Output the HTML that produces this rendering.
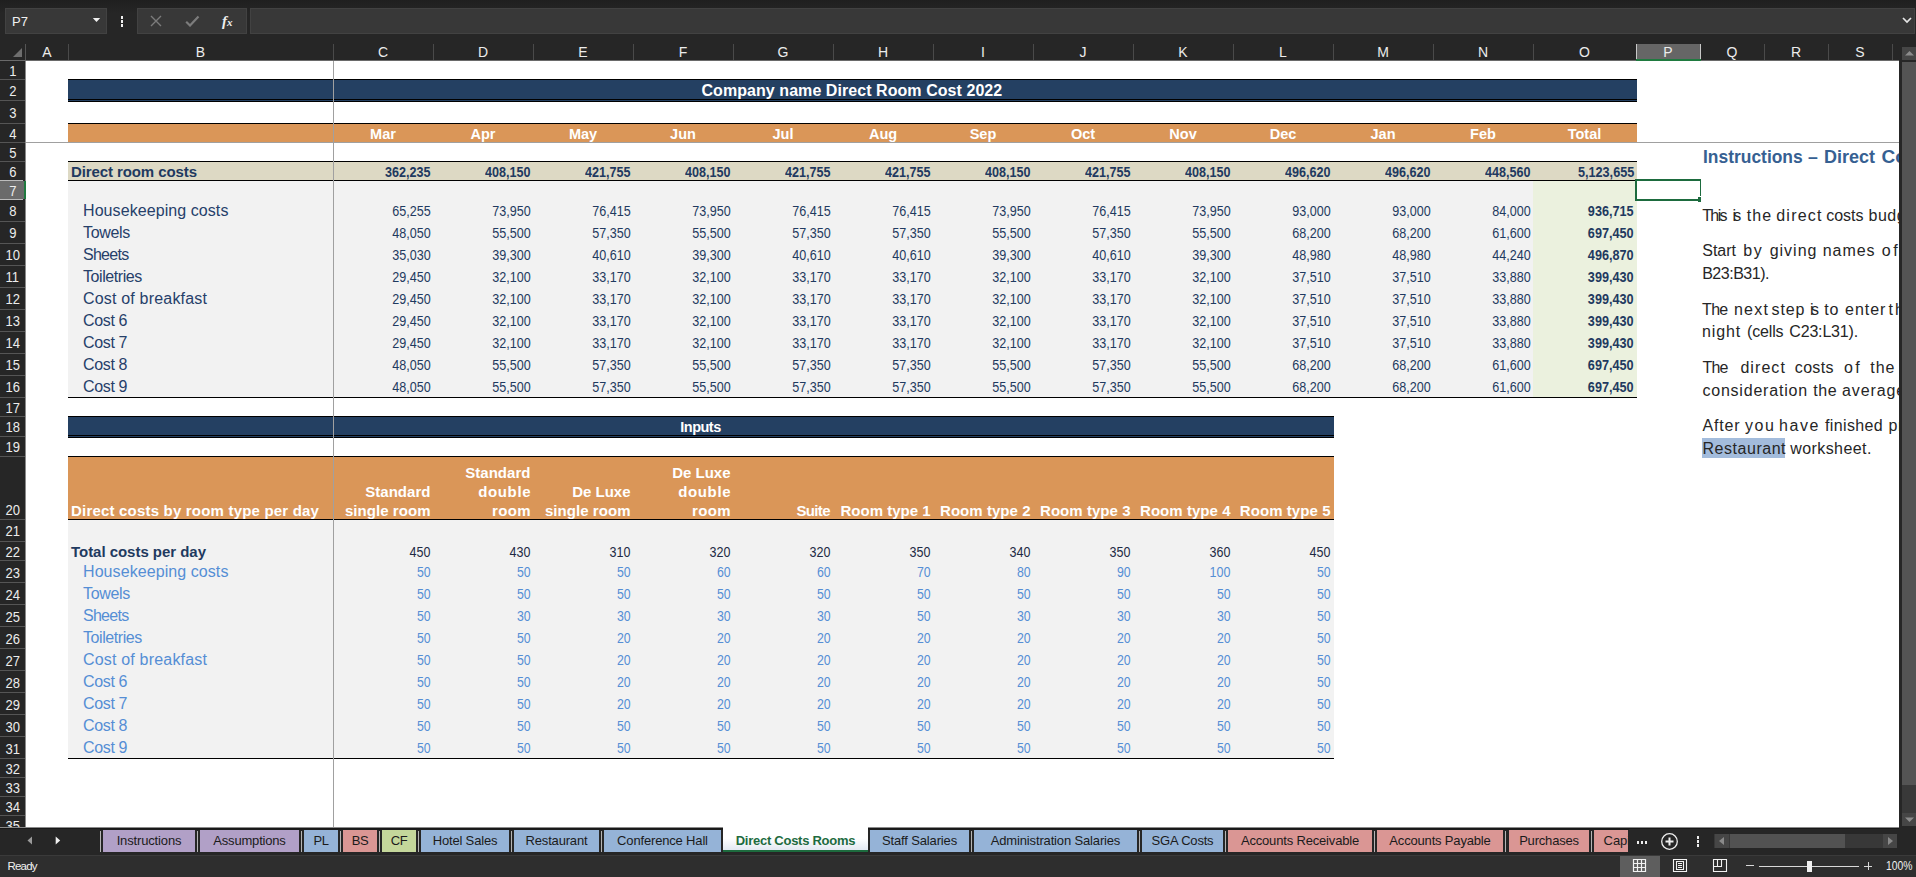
<!DOCTYPE html><html><head><meta charset="utf-8"><style>
html,body{margin:0;padding:0;width:1916px;height:877px;overflow:hidden;background:#262626;}
body{position:relative;font-family:"Liberation Sans",sans-serif;}
div{box-sizing:border-box;}
.t{position:absolute;white-space:nowrap;line-height:1;}
</style></head><body>
<div style="position:absolute;left:0px;top:0px;width:1916px;height:43px;background:linear-gradient(#1f1f1f,#262626 30%);"></div>
<div style="position:absolute;left:5px;top:8px;width:102px;height:26px;background:#383838;border:1px solid #424242;"></div>
<div class="t" style="left:12.00px;top:15.00px;font-size:13px;color:#f0f0f0;font-weight:normal;">P7</div>
<svg style="position:absolute;left:92px;top:17px" width="9" height="6"><path d="M0.8 1 L8.2 1 L4.5 5 Z" fill="#f0f0f0"/></svg>
<div style="position:absolute;left:121px;top:16px;width:2px;height:2.5px;background:#f0f0f0;"></div>
<div style="position:absolute;left:121px;top:20px;width:2px;height:2.5px;background:#f0f0f0;"></div>
<div style="position:absolute;left:121px;top:24px;width:2px;height:2.5px;background:#f0f0f0;"></div>
<div style="position:absolute;left:137px;top:8px;width:110px;height:26px;background:#383838;border:1px solid #424242;"></div>
<svg style="position:absolute;left:150px;top:15px" width="12" height="12"><path d="M1 1 L11 11 M11 1 L1 11" stroke="#7c7c7c" stroke-width="1.4"/></svg>
<svg style="position:absolute;left:185px;top:15px" width="15" height="12"><path d="M1.2 6.8 L5 10.5 L13.5 1.5" stroke="#7c7c7c" stroke-width="2.2" fill="none"/></svg>
<div class="t" style="left:222.00px;top:14.00px;font-size:15px;color:#eeeeee;font-weight:bold;font-family:'Liberation Serif',serif;"><i>f</i><i style="font-size:11px">x</i></div>
<div style="position:absolute;left:250px;top:8px;width:1665px;height:26px;background:#383838;border:1px solid #424242;"></div>
<svg style="position:absolute;left:1902px;top:17px" width="10" height="7"><path d="M1 1 L5 5 L9 1" stroke="#e6e6e6" stroke-width="1.7" fill="none"/></svg>
<div style="position:absolute;left:0px;top:43px;width:1916px;height:17px;background:#262626;"></div>
<svg style="position:absolute;left:13px;top:48px" width="9" height="9"><path d="M9 0 L9 9 L0 9 Z" fill="#6e6e6e"/></svg>
<div style="position:absolute;left:25px;top:44px;width:1px;height:17px;background:#555;"></div>
<div style="position:absolute;left:68px;top:44px;width:1px;height:16px;background:#4a4a4a;"></div>
<div class="t" style="left:42.33px;top:45.00px;font-size:14px;color:#ececec;font-weight:normal;">A</div>
<div style="position:absolute;left:333px;top:44px;width:1px;height:16px;background:#4a4a4a;"></div>
<div class="t" style="left:195.83px;top:45.00px;font-size:14px;color:#ececec;font-weight:normal;">B</div>
<div style="position:absolute;left:433px;top:44px;width:1px;height:16px;background:#4a4a4a;"></div>
<div class="t" style="left:377.95px;top:45.00px;font-size:14px;color:#ececec;font-weight:normal;">C</div>
<div style="position:absolute;left:533px;top:44px;width:1px;height:16px;background:#4a4a4a;"></div>
<div class="t" style="left:477.95px;top:45.00px;font-size:14px;color:#ececec;font-weight:normal;">D</div>
<div style="position:absolute;left:633px;top:44px;width:1px;height:16px;background:#4a4a4a;"></div>
<div class="t" style="left:578.33px;top:45.00px;font-size:14px;color:#ececec;font-weight:normal;">E</div>
<div style="position:absolute;left:733px;top:44px;width:1px;height:16px;background:#4a4a4a;"></div>
<div class="t" style="left:678.73px;top:45.00px;font-size:14px;color:#ececec;font-weight:normal;">F</div>
<div style="position:absolute;left:833px;top:44px;width:1px;height:16px;background:#4a4a4a;"></div>
<div class="t" style="left:777.55px;top:45.00px;font-size:14px;color:#ececec;font-weight:normal;">G</div>
<div style="position:absolute;left:933px;top:44px;width:1px;height:16px;background:#4a4a4a;"></div>
<div class="t" style="left:877.95px;top:45.00px;font-size:14px;color:#ececec;font-weight:normal;">H</div>
<div style="position:absolute;left:1033px;top:44px;width:1px;height:16px;background:#4a4a4a;"></div>
<div class="t" style="left:981.05px;top:45.00px;font-size:14px;color:#ececec;font-weight:normal;">I</div>
<div style="position:absolute;left:1133px;top:44px;width:1px;height:16px;background:#4a4a4a;"></div>
<div class="t" style="left:1079.50px;top:45.00px;font-size:14px;color:#ececec;font-weight:normal;">J</div>
<div style="position:absolute;left:1233px;top:44px;width:1px;height:16px;background:#4a4a4a;"></div>
<div class="t" style="left:1178.33px;top:45.00px;font-size:14px;color:#ececec;font-weight:normal;">K</div>
<div style="position:absolute;left:1333px;top:44px;width:1px;height:16px;background:#4a4a4a;"></div>
<div class="t" style="left:1279.11px;top:45.00px;font-size:14px;color:#ececec;font-weight:normal;">L</div>
<div style="position:absolute;left:1433px;top:44px;width:1px;height:16px;background:#4a4a4a;"></div>
<div class="t" style="left:1377.17px;top:45.00px;font-size:14px;color:#ececec;font-weight:normal;">M</div>
<div style="position:absolute;left:1533px;top:44px;width:1px;height:16px;background:#4a4a4a;"></div>
<div class="t" style="left:1477.95px;top:45.00px;font-size:14px;color:#ececec;font-weight:normal;">N</div>
<div style="position:absolute;left:1636px;top:44px;width:1px;height:16px;background:#4a4a4a;"></div>
<div class="t" style="left:1579.05px;top:45.00px;font-size:14px;color:#ececec;font-weight:normal;">O</div>
<div style="position:absolute;left:1700px;top:44px;width:1px;height:16px;background:#4a4a4a;"></div>
<div style="position:absolute;left:1636px;top:44px;width:65px;height:15px;background:#666666;"></div>
<div style="position:absolute;left:1636px;top:44px;width:1px;height:15px;background:#c8c8c8;"></div>
<div style="position:absolute;left:1700px;top:44px;width:1px;height:15px;background:#c8c8c8;"></div>
<div class="t" style="left:1663.33px;top:45.00px;font-size:14px;color:#ececec;font-weight:normal;">P</div>
<div style="position:absolute;left:1764px;top:44px;width:1px;height:16px;background:#4a4a4a;"></div>
<div class="t" style="left:1726.55px;top:45.00px;font-size:14px;color:#ececec;font-weight:normal;">Q</div>
<div style="position:absolute;left:1828px;top:44px;width:1px;height:16px;background:#4a4a4a;"></div>
<div class="t" style="left:1790.95px;top:45.00px;font-size:14px;color:#ececec;font-weight:normal;">R</div>
<div style="position:absolute;left:1892px;top:44px;width:1px;height:16px;background:#4a4a4a;"></div>
<div class="t" style="left:1855.33px;top:45.00px;font-size:14px;color:#ececec;font-weight:normal;">S</div>
<div style="position:absolute;left:0px;top:60px;width:1899px;height:1px;background:#6a6a6a;"></div>
<div style="position:absolute;left:1636px;top:59px;width:65px;height:2px;background:#1f7a3f;"></div>
<div style="position:absolute;left:0px;top:61px;width:25px;height:766px;background:#262626;"></div>
<div style="position:absolute;left:0px;top:79px;width:25px;height:1px;background:#555555;"></div>
<div class="t" style="left:8.61px;top:64.00px;font-size:14px;color:#ececec;font-weight:normal;transform:scaleX(0.9300);transform-origin:center 0;">1</div>
<div style="position:absolute;left:0px;top:100px;width:25px;height:1px;background:#555555;"></div>
<div class="t" style="left:8.61px;top:84.00px;font-size:14px;color:#ececec;font-weight:normal;transform:scaleX(0.9300);transform-origin:center 0;">2</div>
<div style="position:absolute;left:0px;top:123px;width:25px;height:1px;background:#555555;"></div>
<div class="t" style="left:8.61px;top:106.00px;font-size:14px;color:#ececec;font-weight:normal;transform:scaleX(0.9300);transform-origin:center 0;">3</div>
<div style="position:absolute;left:0px;top:142px;width:25px;height:1px;background:#555555;"></div>
<div class="t" style="left:8.61px;top:127.00px;font-size:14px;color:#ececec;font-weight:normal;transform:scaleX(0.9300);transform-origin:center 0;">4</div>
<div style="position:absolute;left:0px;top:161px;width:25px;height:1px;background:#555555;"></div>
<div class="t" style="left:8.61px;top:146.00px;font-size:14px;color:#ececec;font-weight:normal;transform:scaleX(0.9300);transform-origin:center 0;">5</div>
<div class="t" style="left:8.61px;top:165.00px;font-size:14px;color:#ececec;font-weight:normal;transform:scaleX(0.9300);transform-origin:center 0;">6</div>
<div style="position:absolute;left:0px;top:181px;width:25px;height:18px;background:#6b6b6b;"></div>
<div style="position:absolute;left:0px;top:180px;width:23px;height:1px;background:#bdbdbd;"></div>
<div style="position:absolute;left:0px;top:199px;width:23px;height:1px;background:#bdbdbd;"></div>
<div class="t" style="left:8.61px;top:184.00px;font-size:14px;color:#ececec;font-weight:normal;transform:scaleX(0.9300);transform-origin:center 0;">7</div>
<div style="position:absolute;left:0px;top:221px;width:25px;height:1px;background:#555555;"></div>
<div class="t" style="left:8.61px;top:204.00px;font-size:14px;color:#ececec;font-weight:normal;transform:scaleX(0.9300);transform-origin:center 0;">8</div>
<div style="position:absolute;left:0px;top:243px;width:25px;height:1px;background:#555555;"></div>
<div class="t" style="left:8.61px;top:226.00px;font-size:14px;color:#ececec;font-weight:normal;transform:scaleX(0.9300);transform-origin:center 0;">9</div>
<div style="position:absolute;left:0px;top:265px;width:25px;height:1px;background:#555555;"></div>
<div class="t" style="left:4.72px;top:248.00px;font-size:14px;color:#ececec;font-weight:normal;transform:scaleX(0.9300);transform-origin:center 0;">10</div>
<div style="position:absolute;left:0px;top:287px;width:25px;height:1px;background:#555555;"></div>
<div class="t" style="left:5.23px;top:270.00px;font-size:14px;color:#ececec;font-weight:normal;transform:scaleX(0.9300);transform-origin:center 0;">11</div>
<div style="position:absolute;left:0px;top:309px;width:25px;height:1px;background:#555555;"></div>
<div class="t" style="left:4.72px;top:292.00px;font-size:14px;color:#ececec;font-weight:normal;transform:scaleX(0.9300);transform-origin:center 0;">12</div>
<div style="position:absolute;left:0px;top:331px;width:25px;height:1px;background:#555555;"></div>
<div class="t" style="left:4.72px;top:314.00px;font-size:14px;color:#ececec;font-weight:normal;transform:scaleX(0.9300);transform-origin:center 0;">13</div>
<div style="position:absolute;left:0px;top:353px;width:25px;height:1px;background:#555555;"></div>
<div class="t" style="left:4.72px;top:336.00px;font-size:14px;color:#ececec;font-weight:normal;transform:scaleX(0.9300);transform-origin:center 0;">14</div>
<div style="position:absolute;left:0px;top:375px;width:25px;height:1px;background:#555555;"></div>
<div class="t" style="left:4.72px;top:358.00px;font-size:14px;color:#ececec;font-weight:normal;transform:scaleX(0.9300);transform-origin:center 0;">15</div>
<div style="position:absolute;left:0px;top:397px;width:25px;height:1px;background:#555555;"></div>
<div class="t" style="left:4.72px;top:380.00px;font-size:14px;color:#ececec;font-weight:normal;transform:scaleX(0.9300);transform-origin:center 0;">16</div>
<div style="position:absolute;left:0px;top:416px;width:25px;height:1px;background:#555555;"></div>
<div class="t" style="left:4.72px;top:401.00px;font-size:14px;color:#ececec;font-weight:normal;transform:scaleX(0.9300);transform-origin:center 0;">17</div>
<div style="position:absolute;left:0px;top:436px;width:25px;height:1px;background:#555555;"></div>
<div class="t" style="left:4.72px;top:420.00px;font-size:14px;color:#ececec;font-weight:normal;transform:scaleX(0.9300);transform-origin:center 0;">18</div>
<div style="position:absolute;left:0px;top:456px;width:25px;height:1px;background:#555555;"></div>
<div class="t" style="left:4.72px;top:440.00px;font-size:14px;color:#ececec;font-weight:normal;transform:scaleX(0.9300);transform-origin:center 0;">19</div>
<div style="position:absolute;left:0px;top:519px;width:25px;height:1px;background:#555555;"></div>
<div class="t" style="left:4.72px;top:503.00px;font-size:14px;color:#ececec;font-weight:normal;transform:scaleX(0.9300);transform-origin:center 0;">20</div>
<div style="position:absolute;left:0px;top:541px;width:25px;height:1px;background:#555555;"></div>
<div class="t" style="left:4.72px;top:524.00px;font-size:14px;color:#ececec;font-weight:normal;transform:scaleX(0.9300);transform-origin:center 0;">21</div>
<div style="position:absolute;left:0px;top:560px;width:25px;height:1px;background:#555555;"></div>
<div class="t" style="left:4.72px;top:545.00px;font-size:14px;color:#ececec;font-weight:normal;transform:scaleX(0.9300);transform-origin:center 0;">22</div>
<div style="position:absolute;left:0px;top:582px;width:25px;height:1px;background:#555555;"></div>
<div class="t" style="left:4.72px;top:566.00px;font-size:14px;color:#ececec;font-weight:normal;transform:scaleX(0.9300);transform-origin:center 0;">23</div>
<div style="position:absolute;left:0px;top:604px;width:25px;height:1px;background:#555555;"></div>
<div class="t" style="left:4.72px;top:588.00px;font-size:14px;color:#ececec;font-weight:normal;transform:scaleX(0.9300);transform-origin:center 0;">24</div>
<div style="position:absolute;left:0px;top:626px;width:25px;height:1px;background:#555555;"></div>
<div class="t" style="left:4.72px;top:610.00px;font-size:14px;color:#ececec;font-weight:normal;transform:scaleX(0.9300);transform-origin:center 0;">25</div>
<div style="position:absolute;left:0px;top:648px;width:25px;height:1px;background:#555555;"></div>
<div class="t" style="left:4.72px;top:632.00px;font-size:14px;color:#ececec;font-weight:normal;transform:scaleX(0.9300);transform-origin:center 0;">26</div>
<div style="position:absolute;left:0px;top:670px;width:25px;height:1px;background:#555555;"></div>
<div class="t" style="left:4.72px;top:654.00px;font-size:14px;color:#ececec;font-weight:normal;transform:scaleX(0.9300);transform-origin:center 0;">27</div>
<div style="position:absolute;left:0px;top:692px;width:25px;height:1px;background:#555555;"></div>
<div class="t" style="left:4.72px;top:676.00px;font-size:14px;color:#ececec;font-weight:normal;transform:scaleX(0.9300);transform-origin:center 0;">28</div>
<div style="position:absolute;left:0px;top:714px;width:25px;height:1px;background:#555555;"></div>
<div class="t" style="left:4.72px;top:698.00px;font-size:14px;color:#ececec;font-weight:normal;transform:scaleX(0.9300);transform-origin:center 0;">29</div>
<div style="position:absolute;left:0px;top:736px;width:25px;height:1px;background:#555555;"></div>
<div class="t" style="left:4.72px;top:720.00px;font-size:14px;color:#ececec;font-weight:normal;transform:scaleX(0.9300);transform-origin:center 0;">30</div>
<div style="position:absolute;left:0px;top:758px;width:25px;height:1px;background:#555555;"></div>
<div class="t" style="left:4.72px;top:742.00px;font-size:14px;color:#ececec;font-weight:normal;transform:scaleX(0.9300);transform-origin:center 0;">31</div>
<div style="position:absolute;left:0px;top:777px;width:25px;height:1px;background:#555555;"></div>
<div class="t" style="left:4.72px;top:762.00px;font-size:14px;color:#ececec;font-weight:normal;transform:scaleX(0.9300);transform-origin:center 0;">32</div>
<div style="position:absolute;left:0px;top:796px;width:25px;height:1px;background:#555555;"></div>
<div class="t" style="left:4.72px;top:781.00px;font-size:14px;color:#ececec;font-weight:normal;transform:scaleX(0.9300);transform-origin:center 0;">33</div>
<div style="position:absolute;left:0px;top:815px;width:25px;height:1px;background:#555555;"></div>
<div class="t" style="left:4.72px;top:800.00px;font-size:14px;color:#ececec;font-weight:normal;transform:scaleX(0.9300);transform-origin:center 0;">34</div>
<div class="t" style="left:4.72px;top:819.00px;font-size:14px;color:#ececec;font-weight:normal;transform:scaleX(0.9300);transform-origin:center 0;">35</div>
<div style="position:absolute;left:25px;top:61px;width:1px;height:766px;background:#8a8a8a;"></div>
<div style="position:absolute;left:24px;top:181px;width:2px;height:18px;background:#1f7a3f;"></div>
<div style="position:absolute;left:26px;top:61px;width:1873px;height:766px;overflow:hidden;background:#fff;">
<div style="position:absolute;left:42px;top:18px;width:1569px;height:1px;background:#000;"></div>
<div style="position:absolute;left:42px;top:19px;width:1569px;height:19px;background:#244062;"></div>
<div style="position:absolute;left:42px;top:38px;width:1569px;height:1px;background:#000;"></div>
<div style="position:absolute;left:42px;top:39px;width:1569px;height:1px;background:#244062;"></div>
<div style="position:absolute;left:42px;top:40px;width:1569px;height:1px;background:#000;"></div>
<div class="t" style="left:675.47px;top:22.00px;font-size:16px;color:#ffffff;font-weight:bold;letter-spacing:0.061px;">Company name Direct Room Cost 2022</div>
<div style="position:absolute;left:42px;top:62px;width:1569px;height:1px;background:#000;"></div>
<div style="position:absolute;left:42px;top:63px;width:1569px;height:18px;background:#DA9658;"></div>
<div class="t" style="left:344.11px;top:66.00px;font-size:14.5px;color:#ffffff;font-weight:bold;">Mar</div>
<div class="t" style="left:444.52px;top:66.00px;font-size:14.5px;color:#ffffff;font-weight:bold;">Apr</div>
<div class="t" style="left:542.90px;top:66.00px;font-size:14.5px;color:#ffffff;font-weight:bold;">May</div>
<div class="t" style="left:644.11px;top:66.00px;font-size:14.5px;color:#ffffff;font-weight:bold;">Jun</div>
<div class="t" style="left:746.52px;top:66.00px;font-size:14.5px;color:#ffffff;font-weight:bold;">Jul</div>
<div class="t" style="left:842.91px;top:66.00px;font-size:14.5px;color:#ffffff;font-weight:bold;">Aug</div>
<div class="t" style="left:943.70px;top:66.00px;font-size:14.5px;color:#ffffff;font-weight:bold;">Sep</div>
<div class="t" style="left:1044.91px;top:66.00px;font-size:14.5px;color:#ffffff;font-weight:bold;">Oct</div>
<div class="t" style="left:1143.30px;top:66.00px;font-size:14.5px;color:#ffffff;font-weight:bold;">Nov</div>
<div class="t" style="left:1243.70px;top:66.00px;font-size:14.5px;color:#ffffff;font-weight:bold;">Dec</div>
<div class="t" style="left:1344.51px;top:66.00px;font-size:14.5px;color:#ffffff;font-weight:bold;">Jan</div>
<div class="t" style="left:1444.11px;top:66.00px;font-size:14.5px;color:#ffffff;font-weight:bold;">Feb</div>
<div class="t" style="left:1541.72px;top:66.00px;font-size:14.5px;color:#ffffff;font-weight:bold;">Total</div>
<div style="position:absolute;left:42px;top:100px;width:1569px;height:1px;background:#000;"></div>
<div style="position:absolute;left:42px;top:101px;width:1569px;height:18px;background:#DDD9C4;"></div>
<div style="position:absolute;left:42px;top:119px;width:1569px;height:1px;background:#000;"></div>
<div class="t" style="left:45.00px;top:103.00px;font-size:15px;color:#1F3A60;font-weight:bold;letter-spacing:-0.098px;">Direct room costs</div>
<div class="t" style="left:354.42px;top:104.00px;font-size:14px;color:#1F3A60;font-weight:bold;transform:scaleX(0.8999);transform-origin:right 0;">362,235</div>
<div class="t" style="left:454.42px;top:104.00px;font-size:14px;color:#1F3A60;font-weight:bold;transform:scaleX(0.8999);transform-origin:right 0;">408,150</div>
<div class="t" style="left:554.42px;top:104.00px;font-size:14px;color:#1F3A60;font-weight:bold;transform:scaleX(0.8999);transform-origin:right 0;">421,755</div>
<div class="t" style="left:654.42px;top:104.00px;font-size:14px;color:#1F3A60;font-weight:bold;transform:scaleX(0.8999);transform-origin:right 0;">408,150</div>
<div class="t" style="left:754.42px;top:104.00px;font-size:14px;color:#1F3A60;font-weight:bold;transform:scaleX(0.8999);transform-origin:right 0;">421,755</div>
<div class="t" style="left:854.42px;top:104.00px;font-size:14px;color:#1F3A60;font-weight:bold;transform:scaleX(0.8999);transform-origin:right 0;">421,755</div>
<div class="t" style="left:954.42px;top:104.00px;font-size:14px;color:#1F3A60;font-weight:bold;transform:scaleX(0.8999);transform-origin:right 0;">408,150</div>
<div class="t" style="left:1054.42px;top:104.00px;font-size:14px;color:#1F3A60;font-weight:bold;transform:scaleX(0.8999);transform-origin:right 0;">421,755</div>
<div class="t" style="left:1154.42px;top:104.00px;font-size:14px;color:#1F3A60;font-weight:bold;transform:scaleX(0.8999);transform-origin:right 0;">408,150</div>
<div class="t" style="left:1254.42px;top:104.00px;font-size:14px;color:#1F3A60;font-weight:bold;transform:scaleX(0.8999);transform-origin:right 0;">496,620</div>
<div class="t" style="left:1354.42px;top:104.00px;font-size:14px;color:#1F3A60;font-weight:bold;transform:scaleX(0.8999);transform-origin:right 0;">496,620</div>
<div class="t" style="left:1454.42px;top:104.00px;font-size:14px;color:#1F3A60;font-weight:bold;transform:scaleX(0.8999);transform-origin:right 0;">448,560</div>
<div class="t" style="left:1545.75px;top:104.00px;font-size:14px;color:#1F3A60;font-weight:bold;transform:scaleX(0.9054);transform-origin:right 0;">5,123,655</div>
<div style="position:absolute;left:42px;top:120px;width:1569px;height:216px;background:#F2F2F2;"></div>
<div style="position:absolute;left:1507px;top:120px;width:104px;height:216px;background:#EBF1DE;"></div>
<div style="position:absolute;left:42px;top:336px;width:1569px;height:1px;background:#000;"></div>
<div class="t" style="left:57.00px;top:142.00px;font-size:16px;color:#26406A;font-weight:normal;letter-spacing:0.077px;">Housekeeping costs</div>
<div class="t" style="left:362.20px;top:143.00px;font-size:14px;color:#1F3A60;font-weight:normal;transform:scaleX(0.8992);transform-origin:right 0;">65,255</div>
<div class="t" style="left:462.20px;top:143.00px;font-size:14px;color:#1F3A60;font-weight:normal;transform:scaleX(0.8992);transform-origin:right 0;">73,950</div>
<div class="t" style="left:562.20px;top:143.00px;font-size:14px;color:#1F3A60;font-weight:normal;transform:scaleX(0.8992);transform-origin:right 0;">76,415</div>
<div class="t" style="left:662.20px;top:143.00px;font-size:14px;color:#1F3A60;font-weight:normal;transform:scaleX(0.8992);transform-origin:right 0;">73,950</div>
<div class="t" style="left:762.20px;top:143.00px;font-size:14px;color:#1F3A60;font-weight:normal;transform:scaleX(0.8992);transform-origin:right 0;">76,415</div>
<div class="t" style="left:862.20px;top:143.00px;font-size:14px;color:#1F3A60;font-weight:normal;transform:scaleX(0.8992);transform-origin:right 0;">76,415</div>
<div class="t" style="left:962.20px;top:143.00px;font-size:14px;color:#1F3A60;font-weight:normal;transform:scaleX(0.8992);transform-origin:right 0;">73,950</div>
<div class="t" style="left:1062.20px;top:143.00px;font-size:14px;color:#1F3A60;font-weight:normal;transform:scaleX(0.8992);transform-origin:right 0;">76,415</div>
<div class="t" style="left:1162.20px;top:143.00px;font-size:14px;color:#1F3A60;font-weight:normal;transform:scaleX(0.8992);transform-origin:right 0;">73,950</div>
<div class="t" style="left:1262.20px;top:143.00px;font-size:14px;color:#1F3A60;font-weight:normal;transform:scaleX(0.8992);transform-origin:right 0;">93,000</div>
<div class="t" style="left:1362.20px;top:143.00px;font-size:14px;color:#1F3A60;font-weight:normal;transform:scaleX(0.8992);transform-origin:right 0;">93,000</div>
<div class="t" style="left:1462.20px;top:143.00px;font-size:14px;color:#1F3A60;font-weight:normal;transform:scaleX(0.8992);transform-origin:right 0;">84,000</div>
<div class="t" style="left:1557.42px;top:143.00px;font-size:14px;color:#1F3A60;font-weight:bold;transform:scaleX(0.9039);transform-origin:right 0;">936,715</div>
<div class="t" style="left:57.00px;top:164.00px;font-size:16px;color:#26406A;font-weight:normal;letter-spacing:-0.311px;">Towels</div>
<div class="t" style="left:362.20px;top:165.00px;font-size:14px;color:#1F3A60;font-weight:normal;transform:scaleX(0.8992);transform-origin:right 0;">48,050</div>
<div class="t" style="left:462.20px;top:165.00px;font-size:14px;color:#1F3A60;font-weight:normal;transform:scaleX(0.8992);transform-origin:right 0;">55,500</div>
<div class="t" style="left:562.20px;top:165.00px;font-size:14px;color:#1F3A60;font-weight:normal;transform:scaleX(0.8992);transform-origin:right 0;">57,350</div>
<div class="t" style="left:662.20px;top:165.00px;font-size:14px;color:#1F3A60;font-weight:normal;transform:scaleX(0.8992);transform-origin:right 0;">55,500</div>
<div class="t" style="left:762.20px;top:165.00px;font-size:14px;color:#1F3A60;font-weight:normal;transform:scaleX(0.8992);transform-origin:right 0;">57,350</div>
<div class="t" style="left:862.20px;top:165.00px;font-size:14px;color:#1F3A60;font-weight:normal;transform:scaleX(0.8992);transform-origin:right 0;">57,350</div>
<div class="t" style="left:962.20px;top:165.00px;font-size:14px;color:#1F3A60;font-weight:normal;transform:scaleX(0.8992);transform-origin:right 0;">55,500</div>
<div class="t" style="left:1062.20px;top:165.00px;font-size:14px;color:#1F3A60;font-weight:normal;transform:scaleX(0.8992);transform-origin:right 0;">57,350</div>
<div class="t" style="left:1162.20px;top:165.00px;font-size:14px;color:#1F3A60;font-weight:normal;transform:scaleX(0.8992);transform-origin:right 0;">55,500</div>
<div class="t" style="left:1262.20px;top:165.00px;font-size:14px;color:#1F3A60;font-weight:normal;transform:scaleX(0.8992);transform-origin:right 0;">68,200</div>
<div class="t" style="left:1362.20px;top:165.00px;font-size:14px;color:#1F3A60;font-weight:normal;transform:scaleX(0.8992);transform-origin:right 0;">68,200</div>
<div class="t" style="left:1462.20px;top:165.00px;font-size:14px;color:#1F3A60;font-weight:normal;transform:scaleX(0.8992);transform-origin:right 0;">61,600</div>
<div class="t" style="left:1557.42px;top:165.00px;font-size:14px;color:#1F3A60;font-weight:bold;transform:scaleX(0.9039);transform-origin:right 0;">697,450</div>
<div class="t" style="left:57.00px;top:186.00px;font-size:16px;color:#26406A;font-weight:normal;letter-spacing:-0.729px;">Sheets</div>
<div class="t" style="left:362.20px;top:187.00px;font-size:14px;color:#1F3A60;font-weight:normal;transform:scaleX(0.8992);transform-origin:right 0;">35,030</div>
<div class="t" style="left:462.20px;top:187.00px;font-size:14px;color:#1F3A60;font-weight:normal;transform:scaleX(0.8992);transform-origin:right 0;">39,300</div>
<div class="t" style="left:562.20px;top:187.00px;font-size:14px;color:#1F3A60;font-weight:normal;transform:scaleX(0.8992);transform-origin:right 0;">40,610</div>
<div class="t" style="left:662.20px;top:187.00px;font-size:14px;color:#1F3A60;font-weight:normal;transform:scaleX(0.8992);transform-origin:right 0;">39,300</div>
<div class="t" style="left:762.20px;top:187.00px;font-size:14px;color:#1F3A60;font-weight:normal;transform:scaleX(0.8992);transform-origin:right 0;">40,610</div>
<div class="t" style="left:862.20px;top:187.00px;font-size:14px;color:#1F3A60;font-weight:normal;transform:scaleX(0.8992);transform-origin:right 0;">40,610</div>
<div class="t" style="left:962.20px;top:187.00px;font-size:14px;color:#1F3A60;font-weight:normal;transform:scaleX(0.8992);transform-origin:right 0;">39,300</div>
<div class="t" style="left:1062.20px;top:187.00px;font-size:14px;color:#1F3A60;font-weight:normal;transform:scaleX(0.8992);transform-origin:right 0;">40,610</div>
<div class="t" style="left:1162.20px;top:187.00px;font-size:14px;color:#1F3A60;font-weight:normal;transform:scaleX(0.8992);transform-origin:right 0;">39,300</div>
<div class="t" style="left:1262.20px;top:187.00px;font-size:14px;color:#1F3A60;font-weight:normal;transform:scaleX(0.8992);transform-origin:right 0;">48,980</div>
<div class="t" style="left:1362.20px;top:187.00px;font-size:14px;color:#1F3A60;font-weight:normal;transform:scaleX(0.8992);transform-origin:right 0;">48,980</div>
<div class="t" style="left:1462.20px;top:187.00px;font-size:14px;color:#1F3A60;font-weight:normal;transform:scaleX(0.8992);transform-origin:right 0;">44,240</div>
<div class="t" style="left:1557.42px;top:187.00px;font-size:14px;color:#1F3A60;font-weight:bold;transform:scaleX(0.9039);transform-origin:right 0;">496,870</div>
<div class="t" style="left:57.00px;top:208.00px;font-size:16px;color:#26406A;font-weight:normal;letter-spacing:-0.423px;">Toiletries</div>
<div class="t" style="left:362.20px;top:209.00px;font-size:14px;color:#1F3A60;font-weight:normal;transform:scaleX(0.8992);transform-origin:right 0;">29,450</div>
<div class="t" style="left:462.20px;top:209.00px;font-size:14px;color:#1F3A60;font-weight:normal;transform:scaleX(0.8992);transform-origin:right 0;">32,100</div>
<div class="t" style="left:562.20px;top:209.00px;font-size:14px;color:#1F3A60;font-weight:normal;transform:scaleX(0.8992);transform-origin:right 0;">33,170</div>
<div class="t" style="left:662.20px;top:209.00px;font-size:14px;color:#1F3A60;font-weight:normal;transform:scaleX(0.8992);transform-origin:right 0;">32,100</div>
<div class="t" style="left:762.20px;top:209.00px;font-size:14px;color:#1F3A60;font-weight:normal;transform:scaleX(0.8992);transform-origin:right 0;">33,170</div>
<div class="t" style="left:862.20px;top:209.00px;font-size:14px;color:#1F3A60;font-weight:normal;transform:scaleX(0.8992);transform-origin:right 0;">33,170</div>
<div class="t" style="left:962.20px;top:209.00px;font-size:14px;color:#1F3A60;font-weight:normal;transform:scaleX(0.8992);transform-origin:right 0;">32,100</div>
<div class="t" style="left:1062.20px;top:209.00px;font-size:14px;color:#1F3A60;font-weight:normal;transform:scaleX(0.8992);transform-origin:right 0;">33,170</div>
<div class="t" style="left:1162.20px;top:209.00px;font-size:14px;color:#1F3A60;font-weight:normal;transform:scaleX(0.8992);transform-origin:right 0;">32,100</div>
<div class="t" style="left:1262.20px;top:209.00px;font-size:14px;color:#1F3A60;font-weight:normal;transform:scaleX(0.8992);transform-origin:right 0;">37,510</div>
<div class="t" style="left:1362.20px;top:209.00px;font-size:14px;color:#1F3A60;font-weight:normal;transform:scaleX(0.8992);transform-origin:right 0;">37,510</div>
<div class="t" style="left:1462.20px;top:209.00px;font-size:14px;color:#1F3A60;font-weight:normal;transform:scaleX(0.8992);transform-origin:right 0;">33,880</div>
<div class="t" style="left:1557.42px;top:209.00px;font-size:14px;color:#1F3A60;font-weight:bold;transform:scaleX(0.9039);transform-origin:right 0;">399,430</div>
<div class="t" style="left:57.00px;top:230.00px;font-size:16px;color:#26406A;font-weight:normal;letter-spacing:0.185px;">Cost of breakfast</div>
<div class="t" style="left:362.20px;top:231.00px;font-size:14px;color:#1F3A60;font-weight:normal;transform:scaleX(0.8992);transform-origin:right 0;">29,450</div>
<div class="t" style="left:462.20px;top:231.00px;font-size:14px;color:#1F3A60;font-weight:normal;transform:scaleX(0.8992);transform-origin:right 0;">32,100</div>
<div class="t" style="left:562.20px;top:231.00px;font-size:14px;color:#1F3A60;font-weight:normal;transform:scaleX(0.8992);transform-origin:right 0;">33,170</div>
<div class="t" style="left:662.20px;top:231.00px;font-size:14px;color:#1F3A60;font-weight:normal;transform:scaleX(0.8992);transform-origin:right 0;">32,100</div>
<div class="t" style="left:762.20px;top:231.00px;font-size:14px;color:#1F3A60;font-weight:normal;transform:scaleX(0.8992);transform-origin:right 0;">33,170</div>
<div class="t" style="left:862.20px;top:231.00px;font-size:14px;color:#1F3A60;font-weight:normal;transform:scaleX(0.8992);transform-origin:right 0;">33,170</div>
<div class="t" style="left:962.20px;top:231.00px;font-size:14px;color:#1F3A60;font-weight:normal;transform:scaleX(0.8992);transform-origin:right 0;">32,100</div>
<div class="t" style="left:1062.20px;top:231.00px;font-size:14px;color:#1F3A60;font-weight:normal;transform:scaleX(0.8992);transform-origin:right 0;">33,170</div>
<div class="t" style="left:1162.20px;top:231.00px;font-size:14px;color:#1F3A60;font-weight:normal;transform:scaleX(0.8992);transform-origin:right 0;">32,100</div>
<div class="t" style="left:1262.20px;top:231.00px;font-size:14px;color:#1F3A60;font-weight:normal;transform:scaleX(0.8992);transform-origin:right 0;">37,510</div>
<div class="t" style="left:1362.20px;top:231.00px;font-size:14px;color:#1F3A60;font-weight:normal;transform:scaleX(0.8992);transform-origin:right 0;">37,510</div>
<div class="t" style="left:1462.20px;top:231.00px;font-size:14px;color:#1F3A60;font-weight:normal;transform:scaleX(0.8992);transform-origin:right 0;">33,880</div>
<div class="t" style="left:1557.42px;top:231.00px;font-size:14px;color:#1F3A60;font-weight:bold;transform:scaleX(0.9039);transform-origin:right 0;">399,430</div>
<div class="t" style="left:57.00px;top:252.00px;font-size:16px;color:#26406A;font-weight:normal;letter-spacing:-0.356px;">Cost 6</div>
<div class="t" style="left:362.20px;top:253.00px;font-size:14px;color:#1F3A60;font-weight:normal;transform:scaleX(0.8992);transform-origin:right 0;">29,450</div>
<div class="t" style="left:462.20px;top:253.00px;font-size:14px;color:#1F3A60;font-weight:normal;transform:scaleX(0.8992);transform-origin:right 0;">32,100</div>
<div class="t" style="left:562.20px;top:253.00px;font-size:14px;color:#1F3A60;font-weight:normal;transform:scaleX(0.8992);transform-origin:right 0;">33,170</div>
<div class="t" style="left:662.20px;top:253.00px;font-size:14px;color:#1F3A60;font-weight:normal;transform:scaleX(0.8992);transform-origin:right 0;">32,100</div>
<div class="t" style="left:762.20px;top:253.00px;font-size:14px;color:#1F3A60;font-weight:normal;transform:scaleX(0.8992);transform-origin:right 0;">33,170</div>
<div class="t" style="left:862.20px;top:253.00px;font-size:14px;color:#1F3A60;font-weight:normal;transform:scaleX(0.8992);transform-origin:right 0;">33,170</div>
<div class="t" style="left:962.20px;top:253.00px;font-size:14px;color:#1F3A60;font-weight:normal;transform:scaleX(0.8992);transform-origin:right 0;">32,100</div>
<div class="t" style="left:1062.20px;top:253.00px;font-size:14px;color:#1F3A60;font-weight:normal;transform:scaleX(0.8992);transform-origin:right 0;">33,170</div>
<div class="t" style="left:1162.20px;top:253.00px;font-size:14px;color:#1F3A60;font-weight:normal;transform:scaleX(0.8992);transform-origin:right 0;">32,100</div>
<div class="t" style="left:1262.20px;top:253.00px;font-size:14px;color:#1F3A60;font-weight:normal;transform:scaleX(0.8992);transform-origin:right 0;">37,510</div>
<div class="t" style="left:1362.20px;top:253.00px;font-size:14px;color:#1F3A60;font-weight:normal;transform:scaleX(0.8992);transform-origin:right 0;">37,510</div>
<div class="t" style="left:1462.20px;top:253.00px;font-size:14px;color:#1F3A60;font-weight:normal;transform:scaleX(0.8992);transform-origin:right 0;">33,880</div>
<div class="t" style="left:1557.42px;top:253.00px;font-size:14px;color:#1F3A60;font-weight:bold;transform:scaleX(0.9039);transform-origin:right 0;">399,430</div>
<div class="t" style="left:57.00px;top:274.00px;font-size:16px;color:#26406A;font-weight:normal;letter-spacing:-0.356px;">Cost 7</div>
<div class="t" style="left:362.20px;top:275.00px;font-size:14px;color:#1F3A60;font-weight:normal;transform:scaleX(0.8992);transform-origin:right 0;">29,450</div>
<div class="t" style="left:462.20px;top:275.00px;font-size:14px;color:#1F3A60;font-weight:normal;transform:scaleX(0.8992);transform-origin:right 0;">32,100</div>
<div class="t" style="left:562.20px;top:275.00px;font-size:14px;color:#1F3A60;font-weight:normal;transform:scaleX(0.8992);transform-origin:right 0;">33,170</div>
<div class="t" style="left:662.20px;top:275.00px;font-size:14px;color:#1F3A60;font-weight:normal;transform:scaleX(0.8992);transform-origin:right 0;">32,100</div>
<div class="t" style="left:762.20px;top:275.00px;font-size:14px;color:#1F3A60;font-weight:normal;transform:scaleX(0.8992);transform-origin:right 0;">33,170</div>
<div class="t" style="left:862.20px;top:275.00px;font-size:14px;color:#1F3A60;font-weight:normal;transform:scaleX(0.8992);transform-origin:right 0;">33,170</div>
<div class="t" style="left:962.20px;top:275.00px;font-size:14px;color:#1F3A60;font-weight:normal;transform:scaleX(0.8992);transform-origin:right 0;">32,100</div>
<div class="t" style="left:1062.20px;top:275.00px;font-size:14px;color:#1F3A60;font-weight:normal;transform:scaleX(0.8992);transform-origin:right 0;">33,170</div>
<div class="t" style="left:1162.20px;top:275.00px;font-size:14px;color:#1F3A60;font-weight:normal;transform:scaleX(0.8992);transform-origin:right 0;">32,100</div>
<div class="t" style="left:1262.20px;top:275.00px;font-size:14px;color:#1F3A60;font-weight:normal;transform:scaleX(0.8992);transform-origin:right 0;">37,510</div>
<div class="t" style="left:1362.20px;top:275.00px;font-size:14px;color:#1F3A60;font-weight:normal;transform:scaleX(0.8992);transform-origin:right 0;">37,510</div>
<div class="t" style="left:1462.20px;top:275.00px;font-size:14px;color:#1F3A60;font-weight:normal;transform:scaleX(0.8992);transform-origin:right 0;">33,880</div>
<div class="t" style="left:1557.42px;top:275.00px;font-size:14px;color:#1F3A60;font-weight:bold;transform:scaleX(0.9039);transform-origin:right 0;">399,430</div>
<div class="t" style="left:57.00px;top:296.00px;font-size:16px;color:#26406A;font-weight:normal;letter-spacing:-0.356px;">Cost 8</div>
<div class="t" style="left:362.20px;top:297.00px;font-size:14px;color:#1F3A60;font-weight:normal;transform:scaleX(0.8992);transform-origin:right 0;">48,050</div>
<div class="t" style="left:462.20px;top:297.00px;font-size:14px;color:#1F3A60;font-weight:normal;transform:scaleX(0.8992);transform-origin:right 0;">55,500</div>
<div class="t" style="left:562.20px;top:297.00px;font-size:14px;color:#1F3A60;font-weight:normal;transform:scaleX(0.8992);transform-origin:right 0;">57,350</div>
<div class="t" style="left:662.20px;top:297.00px;font-size:14px;color:#1F3A60;font-weight:normal;transform:scaleX(0.8992);transform-origin:right 0;">55,500</div>
<div class="t" style="left:762.20px;top:297.00px;font-size:14px;color:#1F3A60;font-weight:normal;transform:scaleX(0.8992);transform-origin:right 0;">57,350</div>
<div class="t" style="left:862.20px;top:297.00px;font-size:14px;color:#1F3A60;font-weight:normal;transform:scaleX(0.8992);transform-origin:right 0;">57,350</div>
<div class="t" style="left:962.20px;top:297.00px;font-size:14px;color:#1F3A60;font-weight:normal;transform:scaleX(0.8992);transform-origin:right 0;">55,500</div>
<div class="t" style="left:1062.20px;top:297.00px;font-size:14px;color:#1F3A60;font-weight:normal;transform:scaleX(0.8992);transform-origin:right 0;">57,350</div>
<div class="t" style="left:1162.20px;top:297.00px;font-size:14px;color:#1F3A60;font-weight:normal;transform:scaleX(0.8992);transform-origin:right 0;">55,500</div>
<div class="t" style="left:1262.20px;top:297.00px;font-size:14px;color:#1F3A60;font-weight:normal;transform:scaleX(0.8992);transform-origin:right 0;">68,200</div>
<div class="t" style="left:1362.20px;top:297.00px;font-size:14px;color:#1F3A60;font-weight:normal;transform:scaleX(0.8992);transform-origin:right 0;">68,200</div>
<div class="t" style="left:1462.20px;top:297.00px;font-size:14px;color:#1F3A60;font-weight:normal;transform:scaleX(0.8992);transform-origin:right 0;">61,600</div>
<div class="t" style="left:1557.42px;top:297.00px;font-size:14px;color:#1F3A60;font-weight:bold;transform:scaleX(0.9039);transform-origin:right 0;">697,450</div>
<div class="t" style="left:57.00px;top:318.00px;font-size:16px;color:#26406A;font-weight:normal;letter-spacing:-0.356px;">Cost 9</div>
<div class="t" style="left:362.20px;top:319.00px;font-size:14px;color:#1F3A60;font-weight:normal;transform:scaleX(0.8992);transform-origin:right 0;">48,050</div>
<div class="t" style="left:462.20px;top:319.00px;font-size:14px;color:#1F3A60;font-weight:normal;transform:scaleX(0.8992);transform-origin:right 0;">55,500</div>
<div class="t" style="left:562.20px;top:319.00px;font-size:14px;color:#1F3A60;font-weight:normal;transform:scaleX(0.8992);transform-origin:right 0;">57,350</div>
<div class="t" style="left:662.20px;top:319.00px;font-size:14px;color:#1F3A60;font-weight:normal;transform:scaleX(0.8992);transform-origin:right 0;">55,500</div>
<div class="t" style="left:762.20px;top:319.00px;font-size:14px;color:#1F3A60;font-weight:normal;transform:scaleX(0.8992);transform-origin:right 0;">57,350</div>
<div class="t" style="left:862.20px;top:319.00px;font-size:14px;color:#1F3A60;font-weight:normal;transform:scaleX(0.8992);transform-origin:right 0;">57,350</div>
<div class="t" style="left:962.20px;top:319.00px;font-size:14px;color:#1F3A60;font-weight:normal;transform:scaleX(0.8992);transform-origin:right 0;">55,500</div>
<div class="t" style="left:1062.20px;top:319.00px;font-size:14px;color:#1F3A60;font-weight:normal;transform:scaleX(0.8992);transform-origin:right 0;">57,350</div>
<div class="t" style="left:1162.20px;top:319.00px;font-size:14px;color:#1F3A60;font-weight:normal;transform:scaleX(0.8992);transform-origin:right 0;">55,500</div>
<div class="t" style="left:1262.20px;top:319.00px;font-size:14px;color:#1F3A60;font-weight:normal;transform:scaleX(0.8992);transform-origin:right 0;">68,200</div>
<div class="t" style="left:1362.20px;top:319.00px;font-size:14px;color:#1F3A60;font-weight:normal;transform:scaleX(0.8992);transform-origin:right 0;">68,200</div>
<div class="t" style="left:1462.20px;top:319.00px;font-size:14px;color:#1F3A60;font-weight:normal;transform:scaleX(0.8992);transform-origin:right 0;">61,600</div>
<div class="t" style="left:1557.42px;top:319.00px;font-size:14px;color:#1F3A60;font-weight:bold;transform:scaleX(0.9039);transform-origin:right 0;">697,450</div>
<div style="position:absolute;left:42px;top:355px;width:1266px;height:1px;background:#000;"></div>
<div style="position:absolute;left:42px;top:356px;width:1266px;height:18px;background:#244062;"></div>
<div style="position:absolute;left:42px;top:374px;width:1266px;height:1px;background:#000;"></div>
<div style="position:absolute;left:42px;top:375px;width:1266px;height:1px;background:#244062;"></div>
<div style="position:absolute;left:42px;top:376px;width:1266px;height:1px;background:#000;"></div>
<div class="t" style="left:654.25px;top:359.00px;font-size:14.5px;color:#ffffff;font-weight:bold;letter-spacing:-0.500px;">Inputs</div>
<div style="position:absolute;left:42px;top:395px;width:1266px;height:1px;background:#000;"></div>
<div style="position:absolute;left:42px;top:396px;width:1266px;height:62px;background:#DA9658;"></div>
<div style="position:absolute;left:42px;top:458px;width:1266px;height:1px;background:#000;"></div>
<div class="t" style="left:45.00px;top:442.00px;font-size:15px;color:#ffffff;font-weight:bold;letter-spacing:0.194px;">Direct costs by room type per day</div>
<div class="t" style="left:339.20px;top:423.00px;font-size:15px;color:#ffffff;font-weight:bold;letter-spacing:0.043px;">Standard</div>
<div class="t" style="left:318.90px;top:442.00px;font-size:15px;color:#ffffff;font-weight:bold;letter-spacing:0.058px;">single room</div>
<div class="t" style="left:439.20px;top:404.00px;font-size:15px;color:#ffffff;font-weight:bold;letter-spacing:0.043px;">Standard</div>
<div class="t" style="left:452.30px;top:423.00px;font-size:15px;color:#ffffff;font-weight:bold;letter-spacing:0.612px;">double</div>
<div class="t" style="left:466.00px;top:442.00px;font-size:15px;color:#ffffff;font-weight:bold;letter-spacing:0.333px;">room</div>
<div class="t" style="left:546.30px;top:423.00px;font-size:15px;color:#ffffff;font-weight:bold;letter-spacing:-0.024px;">De Luxe</div>
<div class="t" style="left:518.90px;top:442.00px;font-size:15px;color:#ffffff;font-weight:bold;letter-spacing:0.058px;">single room</div>
<div class="t" style="left:646.30px;top:404.00px;font-size:15px;color:#ffffff;font-weight:bold;letter-spacing:-0.024px;">De Luxe</div>
<div class="t" style="left:652.30px;top:423.00px;font-size:15px;color:#ffffff;font-weight:bold;letter-spacing:0.612px;">double</div>
<div class="t" style="left:666.00px;top:442.00px;font-size:15px;color:#ffffff;font-weight:bold;letter-spacing:0.333px;">room</div>
<div class="t" style="left:770.50px;top:442.00px;font-size:15px;color:#ffffff;font-weight:bold;letter-spacing:-0.668px;">Suite</div>
<div class="t" style="left:814.50px;top:442.00px;font-size:15px;color:#ffffff;font-weight:bold;letter-spacing:-0.002px;">Room type 1</div>
<div class="t" style="left:914.00px;top:442.00px;font-size:15px;color:#ffffff;font-weight:bold;letter-spacing:0.048px;">Room type 2</div>
<div class="t" style="left:1014.00px;top:442.00px;font-size:15px;color:#ffffff;font-weight:bold;letter-spacing:0.048px;">Room type 3</div>
<div class="t" style="left:1114.00px;top:442.00px;font-size:15px;color:#ffffff;font-weight:bold;letter-spacing:0.048px;">Room type 4</div>
<div class="t" style="left:1213.80px;top:442.00px;font-size:15px;color:#ffffff;font-weight:bold;letter-spacing:0.068px;">Room type 5</div>
<div style="position:absolute;left:42px;top:459px;width:1266px;height:238px;background:#F2F2F2;"></div>
<div style="position:absolute;left:42px;top:697px;width:1266px;height:1px;background:#000;"></div>
<div class="t" style="left:45.00px;top:483.00px;font-size:15px;color:#1F3A60;font-weight:bold;letter-spacing:-0.034px;">Total costs per day</div>
<div class="t" style="left:381.16px;top:484.00px;font-size:14px;color:#1d2b45;font-weight:normal;transform:scaleX(0.8954);transform-origin:right 0;">450</div>
<div class="t" style="left:481.16px;top:484.00px;font-size:14px;color:#1d2b45;font-weight:normal;transform:scaleX(0.8954);transform-origin:right 0;">430</div>
<div class="t" style="left:581.16px;top:484.00px;font-size:14px;color:#1d2b45;font-weight:normal;transform:scaleX(0.8954);transform-origin:right 0;">310</div>
<div class="t" style="left:681.16px;top:484.00px;font-size:14px;color:#1d2b45;font-weight:normal;transform:scaleX(0.8954);transform-origin:right 0;">320</div>
<div class="t" style="left:781.16px;top:484.00px;font-size:14px;color:#1d2b45;font-weight:normal;transform:scaleX(0.8954);transform-origin:right 0;">320</div>
<div class="t" style="left:881.16px;top:484.00px;font-size:14px;color:#1d2b45;font-weight:normal;transform:scaleX(0.8954);transform-origin:right 0;">350</div>
<div class="t" style="left:981.16px;top:484.00px;font-size:14px;color:#1d2b45;font-weight:normal;transform:scaleX(0.8954);transform-origin:right 0;">340</div>
<div class="t" style="left:1081.16px;top:484.00px;font-size:14px;color:#1d2b45;font-weight:normal;transform:scaleX(0.8954);transform-origin:right 0;">350</div>
<div class="t" style="left:1181.16px;top:484.00px;font-size:14px;color:#1d2b45;font-weight:normal;transform:scaleX(0.8954);transform-origin:right 0;">360</div>
<div class="t" style="left:1281.16px;top:484.00px;font-size:14px;color:#1d2b45;font-weight:normal;transform:scaleX(0.8954);transform-origin:right 0;">450</div>
<div class="t" style="left:57.00px;top:503.00px;font-size:16px;color:#558ED5;font-weight:normal;letter-spacing:0.077px;">Housekeeping costs</div>
<div class="t" style="left:388.94px;top:504.00px;font-size:14px;color:#558ED5;font-weight:normal;transform:scaleX(0.8783);transform-origin:right 0;">50</div>
<div class="t" style="left:488.94px;top:504.00px;font-size:14px;color:#558ED5;font-weight:normal;transform:scaleX(0.8783);transform-origin:right 0;">50</div>
<div class="t" style="left:588.94px;top:504.00px;font-size:14px;color:#558ED5;font-weight:normal;transform:scaleX(0.8783);transform-origin:right 0;">50</div>
<div class="t" style="left:688.94px;top:504.00px;font-size:14px;color:#558ED5;font-weight:normal;transform:scaleX(0.8783);transform-origin:right 0;">60</div>
<div class="t" style="left:788.94px;top:504.00px;font-size:14px;color:#558ED5;font-weight:normal;transform:scaleX(0.8783);transform-origin:right 0;">60</div>
<div class="t" style="left:888.94px;top:504.00px;font-size:14px;color:#558ED5;font-weight:normal;transform:scaleX(0.8783);transform-origin:right 0;">70</div>
<div class="t" style="left:988.94px;top:504.00px;font-size:14px;color:#558ED5;font-weight:normal;transform:scaleX(0.8783);transform-origin:right 0;">80</div>
<div class="t" style="left:1088.94px;top:504.00px;font-size:14px;color:#558ED5;font-weight:normal;transform:scaleX(0.8783);transform-origin:right 0;">90</div>
<div class="t" style="left:1181.16px;top:504.00px;font-size:14px;color:#558ED5;font-weight:normal;transform:scaleX(0.8954);transform-origin:right 0;">100</div>
<div class="t" style="left:1288.94px;top:504.00px;font-size:14px;color:#558ED5;font-weight:normal;transform:scaleX(0.8783);transform-origin:right 0;">50</div>
<div class="t" style="left:57.00px;top:525.00px;font-size:16px;color:#558ED5;font-weight:normal;letter-spacing:-0.311px;">Towels</div>
<div class="t" style="left:388.94px;top:526.00px;font-size:14px;color:#558ED5;font-weight:normal;transform:scaleX(0.8783);transform-origin:right 0;">50</div>
<div class="t" style="left:488.94px;top:526.00px;font-size:14px;color:#558ED5;font-weight:normal;transform:scaleX(0.8783);transform-origin:right 0;">50</div>
<div class="t" style="left:588.94px;top:526.00px;font-size:14px;color:#558ED5;font-weight:normal;transform:scaleX(0.8783);transform-origin:right 0;">50</div>
<div class="t" style="left:688.94px;top:526.00px;font-size:14px;color:#558ED5;font-weight:normal;transform:scaleX(0.8783);transform-origin:right 0;">50</div>
<div class="t" style="left:788.94px;top:526.00px;font-size:14px;color:#558ED5;font-weight:normal;transform:scaleX(0.8783);transform-origin:right 0;">50</div>
<div class="t" style="left:888.94px;top:526.00px;font-size:14px;color:#558ED5;font-weight:normal;transform:scaleX(0.8783);transform-origin:right 0;">50</div>
<div class="t" style="left:988.94px;top:526.00px;font-size:14px;color:#558ED5;font-weight:normal;transform:scaleX(0.8783);transform-origin:right 0;">50</div>
<div class="t" style="left:1088.94px;top:526.00px;font-size:14px;color:#558ED5;font-weight:normal;transform:scaleX(0.8783);transform-origin:right 0;">50</div>
<div class="t" style="left:1188.94px;top:526.00px;font-size:14px;color:#558ED5;font-weight:normal;transform:scaleX(0.8783);transform-origin:right 0;">50</div>
<div class="t" style="left:1288.94px;top:526.00px;font-size:14px;color:#558ED5;font-weight:normal;transform:scaleX(0.8783);transform-origin:right 0;">50</div>
<div class="t" style="left:57.00px;top:547.00px;font-size:16px;color:#558ED5;font-weight:normal;letter-spacing:-0.729px;">Sheets</div>
<div class="t" style="left:388.94px;top:548.00px;font-size:14px;color:#558ED5;font-weight:normal;transform:scaleX(0.8783);transform-origin:right 0;">50</div>
<div class="t" style="left:488.94px;top:548.00px;font-size:14px;color:#558ED5;font-weight:normal;transform:scaleX(0.8783);transform-origin:right 0;">30</div>
<div class="t" style="left:588.94px;top:548.00px;font-size:14px;color:#558ED5;font-weight:normal;transform:scaleX(0.8783);transform-origin:right 0;">30</div>
<div class="t" style="left:688.94px;top:548.00px;font-size:14px;color:#558ED5;font-weight:normal;transform:scaleX(0.8783);transform-origin:right 0;">30</div>
<div class="t" style="left:788.94px;top:548.00px;font-size:14px;color:#558ED5;font-weight:normal;transform:scaleX(0.8783);transform-origin:right 0;">30</div>
<div class="t" style="left:888.94px;top:548.00px;font-size:14px;color:#558ED5;font-weight:normal;transform:scaleX(0.8783);transform-origin:right 0;">50</div>
<div class="t" style="left:988.94px;top:548.00px;font-size:14px;color:#558ED5;font-weight:normal;transform:scaleX(0.8783);transform-origin:right 0;">30</div>
<div class="t" style="left:1088.94px;top:548.00px;font-size:14px;color:#558ED5;font-weight:normal;transform:scaleX(0.8783);transform-origin:right 0;">30</div>
<div class="t" style="left:1188.94px;top:548.00px;font-size:14px;color:#558ED5;font-weight:normal;transform:scaleX(0.8783);transform-origin:right 0;">30</div>
<div class="t" style="left:1288.94px;top:548.00px;font-size:14px;color:#558ED5;font-weight:normal;transform:scaleX(0.8783);transform-origin:right 0;">50</div>
<div class="t" style="left:57.00px;top:569.00px;font-size:16px;color:#558ED5;font-weight:normal;letter-spacing:-0.423px;">Toiletries</div>
<div class="t" style="left:388.94px;top:570.00px;font-size:14px;color:#558ED5;font-weight:normal;transform:scaleX(0.8783);transform-origin:right 0;">50</div>
<div class="t" style="left:488.94px;top:570.00px;font-size:14px;color:#558ED5;font-weight:normal;transform:scaleX(0.8783);transform-origin:right 0;">50</div>
<div class="t" style="left:588.94px;top:570.00px;font-size:14px;color:#558ED5;font-weight:normal;transform:scaleX(0.8783);transform-origin:right 0;">20</div>
<div class="t" style="left:688.94px;top:570.00px;font-size:14px;color:#558ED5;font-weight:normal;transform:scaleX(0.8783);transform-origin:right 0;">20</div>
<div class="t" style="left:788.94px;top:570.00px;font-size:14px;color:#558ED5;font-weight:normal;transform:scaleX(0.8783);transform-origin:right 0;">20</div>
<div class="t" style="left:888.94px;top:570.00px;font-size:14px;color:#558ED5;font-weight:normal;transform:scaleX(0.8783);transform-origin:right 0;">20</div>
<div class="t" style="left:988.94px;top:570.00px;font-size:14px;color:#558ED5;font-weight:normal;transform:scaleX(0.8783);transform-origin:right 0;">20</div>
<div class="t" style="left:1088.94px;top:570.00px;font-size:14px;color:#558ED5;font-weight:normal;transform:scaleX(0.8783);transform-origin:right 0;">20</div>
<div class="t" style="left:1188.94px;top:570.00px;font-size:14px;color:#558ED5;font-weight:normal;transform:scaleX(0.8783);transform-origin:right 0;">20</div>
<div class="t" style="left:1288.94px;top:570.00px;font-size:14px;color:#558ED5;font-weight:normal;transform:scaleX(0.8783);transform-origin:right 0;">50</div>
<div class="t" style="left:57.00px;top:591.00px;font-size:16px;color:#558ED5;font-weight:normal;letter-spacing:0.185px;">Cost of breakfast</div>
<div class="t" style="left:388.94px;top:592.00px;font-size:14px;color:#558ED5;font-weight:normal;transform:scaleX(0.8783);transform-origin:right 0;">50</div>
<div class="t" style="left:488.94px;top:592.00px;font-size:14px;color:#558ED5;font-weight:normal;transform:scaleX(0.8783);transform-origin:right 0;">50</div>
<div class="t" style="left:588.94px;top:592.00px;font-size:14px;color:#558ED5;font-weight:normal;transform:scaleX(0.8783);transform-origin:right 0;">20</div>
<div class="t" style="left:688.94px;top:592.00px;font-size:14px;color:#558ED5;font-weight:normal;transform:scaleX(0.8783);transform-origin:right 0;">20</div>
<div class="t" style="left:788.94px;top:592.00px;font-size:14px;color:#558ED5;font-weight:normal;transform:scaleX(0.8783);transform-origin:right 0;">20</div>
<div class="t" style="left:888.94px;top:592.00px;font-size:14px;color:#558ED5;font-weight:normal;transform:scaleX(0.8783);transform-origin:right 0;">20</div>
<div class="t" style="left:988.94px;top:592.00px;font-size:14px;color:#558ED5;font-weight:normal;transform:scaleX(0.8783);transform-origin:right 0;">20</div>
<div class="t" style="left:1088.94px;top:592.00px;font-size:14px;color:#558ED5;font-weight:normal;transform:scaleX(0.8783);transform-origin:right 0;">20</div>
<div class="t" style="left:1188.94px;top:592.00px;font-size:14px;color:#558ED5;font-weight:normal;transform:scaleX(0.8783);transform-origin:right 0;">20</div>
<div class="t" style="left:1288.94px;top:592.00px;font-size:14px;color:#558ED5;font-weight:normal;transform:scaleX(0.8783);transform-origin:right 0;">50</div>
<div class="t" style="left:57.00px;top:613.00px;font-size:16px;color:#558ED5;font-weight:normal;letter-spacing:-0.356px;">Cost 6</div>
<div class="t" style="left:388.94px;top:614.00px;font-size:14px;color:#558ED5;font-weight:normal;transform:scaleX(0.8783);transform-origin:right 0;">50</div>
<div class="t" style="left:488.94px;top:614.00px;font-size:14px;color:#558ED5;font-weight:normal;transform:scaleX(0.8783);transform-origin:right 0;">50</div>
<div class="t" style="left:588.94px;top:614.00px;font-size:14px;color:#558ED5;font-weight:normal;transform:scaleX(0.8783);transform-origin:right 0;">20</div>
<div class="t" style="left:688.94px;top:614.00px;font-size:14px;color:#558ED5;font-weight:normal;transform:scaleX(0.8783);transform-origin:right 0;">20</div>
<div class="t" style="left:788.94px;top:614.00px;font-size:14px;color:#558ED5;font-weight:normal;transform:scaleX(0.8783);transform-origin:right 0;">20</div>
<div class="t" style="left:888.94px;top:614.00px;font-size:14px;color:#558ED5;font-weight:normal;transform:scaleX(0.8783);transform-origin:right 0;">20</div>
<div class="t" style="left:988.94px;top:614.00px;font-size:14px;color:#558ED5;font-weight:normal;transform:scaleX(0.8783);transform-origin:right 0;">20</div>
<div class="t" style="left:1088.94px;top:614.00px;font-size:14px;color:#558ED5;font-weight:normal;transform:scaleX(0.8783);transform-origin:right 0;">20</div>
<div class="t" style="left:1188.94px;top:614.00px;font-size:14px;color:#558ED5;font-weight:normal;transform:scaleX(0.8783);transform-origin:right 0;">20</div>
<div class="t" style="left:1288.94px;top:614.00px;font-size:14px;color:#558ED5;font-weight:normal;transform:scaleX(0.8783);transform-origin:right 0;">50</div>
<div class="t" style="left:57.00px;top:635.00px;font-size:16px;color:#558ED5;font-weight:normal;letter-spacing:-0.356px;">Cost 7</div>
<div class="t" style="left:388.94px;top:636.00px;font-size:14px;color:#558ED5;font-weight:normal;transform:scaleX(0.8783);transform-origin:right 0;">50</div>
<div class="t" style="left:488.94px;top:636.00px;font-size:14px;color:#558ED5;font-weight:normal;transform:scaleX(0.8783);transform-origin:right 0;">50</div>
<div class="t" style="left:588.94px;top:636.00px;font-size:14px;color:#558ED5;font-weight:normal;transform:scaleX(0.8783);transform-origin:right 0;">20</div>
<div class="t" style="left:688.94px;top:636.00px;font-size:14px;color:#558ED5;font-weight:normal;transform:scaleX(0.8783);transform-origin:right 0;">20</div>
<div class="t" style="left:788.94px;top:636.00px;font-size:14px;color:#558ED5;font-weight:normal;transform:scaleX(0.8783);transform-origin:right 0;">20</div>
<div class="t" style="left:888.94px;top:636.00px;font-size:14px;color:#558ED5;font-weight:normal;transform:scaleX(0.8783);transform-origin:right 0;">20</div>
<div class="t" style="left:988.94px;top:636.00px;font-size:14px;color:#558ED5;font-weight:normal;transform:scaleX(0.8783);transform-origin:right 0;">20</div>
<div class="t" style="left:1088.94px;top:636.00px;font-size:14px;color:#558ED5;font-weight:normal;transform:scaleX(0.8783);transform-origin:right 0;">20</div>
<div class="t" style="left:1188.94px;top:636.00px;font-size:14px;color:#558ED5;font-weight:normal;transform:scaleX(0.8783);transform-origin:right 0;">20</div>
<div class="t" style="left:1288.94px;top:636.00px;font-size:14px;color:#558ED5;font-weight:normal;transform:scaleX(0.8783);transform-origin:right 0;">50</div>
<div class="t" style="left:57.00px;top:657.00px;font-size:16px;color:#558ED5;font-weight:normal;letter-spacing:-0.356px;">Cost 8</div>
<div class="t" style="left:388.94px;top:658.00px;font-size:14px;color:#558ED5;font-weight:normal;transform:scaleX(0.8783);transform-origin:right 0;">50</div>
<div class="t" style="left:488.94px;top:658.00px;font-size:14px;color:#558ED5;font-weight:normal;transform:scaleX(0.8783);transform-origin:right 0;">50</div>
<div class="t" style="left:588.94px;top:658.00px;font-size:14px;color:#558ED5;font-weight:normal;transform:scaleX(0.8783);transform-origin:right 0;">50</div>
<div class="t" style="left:688.94px;top:658.00px;font-size:14px;color:#558ED5;font-weight:normal;transform:scaleX(0.8783);transform-origin:right 0;">50</div>
<div class="t" style="left:788.94px;top:658.00px;font-size:14px;color:#558ED5;font-weight:normal;transform:scaleX(0.8783);transform-origin:right 0;">50</div>
<div class="t" style="left:888.94px;top:658.00px;font-size:14px;color:#558ED5;font-weight:normal;transform:scaleX(0.8783);transform-origin:right 0;">50</div>
<div class="t" style="left:988.94px;top:658.00px;font-size:14px;color:#558ED5;font-weight:normal;transform:scaleX(0.8783);transform-origin:right 0;">50</div>
<div class="t" style="left:1088.94px;top:658.00px;font-size:14px;color:#558ED5;font-weight:normal;transform:scaleX(0.8783);transform-origin:right 0;">50</div>
<div class="t" style="left:1188.94px;top:658.00px;font-size:14px;color:#558ED5;font-weight:normal;transform:scaleX(0.8783);transform-origin:right 0;">50</div>
<div class="t" style="left:1288.94px;top:658.00px;font-size:14px;color:#558ED5;font-weight:normal;transform:scaleX(0.8783);transform-origin:right 0;">50</div>
<div class="t" style="left:57.00px;top:679.00px;font-size:16px;color:#558ED5;font-weight:normal;letter-spacing:-0.356px;">Cost 9</div>
<div class="t" style="left:388.94px;top:680.00px;font-size:14px;color:#558ED5;font-weight:normal;transform:scaleX(0.8783);transform-origin:right 0;">50</div>
<div class="t" style="left:488.94px;top:680.00px;font-size:14px;color:#558ED5;font-weight:normal;transform:scaleX(0.8783);transform-origin:right 0;">50</div>
<div class="t" style="left:588.94px;top:680.00px;font-size:14px;color:#558ED5;font-weight:normal;transform:scaleX(0.8783);transform-origin:right 0;">50</div>
<div class="t" style="left:688.94px;top:680.00px;font-size:14px;color:#558ED5;font-weight:normal;transform:scaleX(0.8783);transform-origin:right 0;">50</div>
<div class="t" style="left:788.94px;top:680.00px;font-size:14px;color:#558ED5;font-weight:normal;transform:scaleX(0.8783);transform-origin:right 0;">50</div>
<div class="t" style="left:888.94px;top:680.00px;font-size:14px;color:#558ED5;font-weight:normal;transform:scaleX(0.8783);transform-origin:right 0;">50</div>
<div class="t" style="left:988.94px;top:680.00px;font-size:14px;color:#558ED5;font-weight:normal;transform:scaleX(0.8783);transform-origin:right 0;">50</div>
<div class="t" style="left:1088.94px;top:680.00px;font-size:14px;color:#558ED5;font-weight:normal;transform:scaleX(0.8783);transform-origin:right 0;">50</div>
<div class="t" style="left:1188.94px;top:680.00px;font-size:14px;color:#558ED5;font-weight:normal;transform:scaleX(0.8783);transform-origin:right 0;">50</div>
<div class="t" style="left:1288.94px;top:680.00px;font-size:14px;color:#558ED5;font-weight:normal;transform:scaleX(0.8783);transform-origin:right 0;">50</div>
<div style="position:absolute;left:0px;top:81px;width:1873px;height:1px;background:#a0a0a0;"></div>
<div style="position:absolute;left:307px;top:0px;width:1px;height:766px;background:#a0a0a0;"></div>
<div style="position:absolute;left:1609px;top:118px;width:66px;height:22px;border:2px solid #1d6b3e;border-right:1px solid #1d6b3e;"></div>
<div style="position:absolute;left:1671px;top:135px;width:5px;height:3px;background:#ffffff;"></div>
<div style="position:absolute;left:1672px;top:136px;width:3px;height:5px;background:#1d6b3e;"></div>
<div class="t" style="left:1676.50px;top:86.00px;font-size:19px;color:#366092;font-weight:bold;transform:scaleX(0.9169);transform-origin:left 0;">Instructions</div>
<div class="t" style="left:1781.50px;top:86.00px;font-size:19px;color:#366092;font-weight:bold;transform:scaleX(0.9278);transform-origin:left 0;">–</div>
<div class="t" style="left:1798.30px;top:86.00px;font-size:19px;color:#366092;font-weight:bold;transform:scaleX(0.9472);transform-origin:left 0;">Direct</div>
<div class="t" style="left:1855.50px;top:86.00px;font-size:19px;color:#366092;font-weight:bold;">Costs Rooms</div>
<div style="position:absolute;left:1676px;top:377px;width:83px;height:20px;background:#A3BCDC;"></div>
<div class="t" style="left:1676.20px;top:147.00px;font-size:16px;color:#262626;font-weight:normal;letter-spacing:-1.617px;">This</div>
<div class="t" style="left:1706.50px;top:147.00px;font-size:16px;color:#262626;font-weight:normal;letter-spacing:-2.762px;">is</div>
<div class="t" style="left:1720.70px;top:147.00px;font-size:16px;color:#262626;font-weight:normal;letter-spacing:1.117px;">the</div>
<div class="t" style="left:1750.20px;top:147.00px;font-size:16px;color:#262626;font-weight:normal;letter-spacing:1.249px;">direct</div>
<div class="t" style="left:1800.20px;top:147.00px;font-size:16px;color:#262626;font-weight:normal;letter-spacing:-0.015px;">costs</div>
<div class="t" style="left:1842.50px;top:147.00px;font-size:16px;color:#262626;font-weight:normal;letter-spacing:0.523px;">budget</div>
<div class="t" style="left:1676.20px;top:182.00px;font-size:16px;color:#262626;font-weight:normal;letter-spacing:0.022px;">Start</div>
<div class="t" style="left:1717.20px;top:182.00px;font-size:16px;color:#262626;font-weight:normal;letter-spacing:1.694px;">by</div>
<div class="t" style="left:1743.70px;top:182.00px;font-size:16px;color:#262626;font-weight:normal;letter-spacing:0.991px;">giving</div>
<div class="t" style="left:1796.70px;top:182.00px;font-size:16px;color:#262626;font-weight:normal;letter-spacing:0.963px;">names</div>
<div class="t" style="left:1855.70px;top:182.00px;font-size:16px;color:#262626;font-weight:normal;letter-spacing:2.641px;">of</div>
<div class="t" style="left:1676.20px;top:205.00px;font-size:16px;color:#262626;font-weight:normal;letter-spacing:-0.488px;">B23:B31).</div>
<div class="t" style="left:1676.10px;top:241.00px;font-size:16px;color:#262626;font-weight:normal;letter-spacing:-0.697px;">The</div>
<div class="t" style="left:1707.90px;top:241.00px;font-size:16px;color:#262626;font-weight:normal;letter-spacing:1.245px;">next</div>
<div class="t" style="left:1745.50px;top:241.00px;font-size:16px;color:#262626;font-weight:normal;letter-spacing:0.911px;">step</div>
<div class="t" style="left:1784.10px;top:241.00px;font-size:16px;color:#262626;font-weight:normal;letter-spacing:-2.562px;">is</div>
<div class="t" style="left:1798.20px;top:241.00px;font-size:16px;color:#262626;font-weight:normal;letter-spacing:0.841px;">to</div>
<div class="t" style="left:1819.10px;top:241.00px;font-size:16px;color:#262626;font-weight:normal;letter-spacing:0.950px;">enter</div>
<div class="t" style="left:1862.50px;top:241.00px;font-size:16px;color:#262626;font-weight:normal;letter-spacing:2.167px;">the</div>
<div class="t" style="left:1676.10px;top:263.00px;font-size:16px;color:#262626;font-weight:normal;letter-spacing:0.866px;">night</div>
<div class="t" style="left:1721.00px;top:263.00px;font-size:16px;color:#262626;font-weight:normal;letter-spacing:-0.152px;">(cells</div>
<div class="t" style="left:1763.30px;top:263.00px;font-size:16px;color:#262626;font-weight:normal;letter-spacing:-0.179px;">C23:L31).</div>
<div class="t" style="left:1676.40px;top:299.00px;font-size:16px;color:#262626;font-weight:normal;letter-spacing:-0.747px;">The</div>
<div class="t" style="left:1714.40px;top:299.00px;font-size:16px;color:#262626;font-weight:normal;letter-spacing:1.069px;">direct</div>
<div class="t" style="left:1768.80px;top:299.00px;font-size:16px;color:#262626;font-weight:normal;letter-spacing:0.335px;">costs</div>
<div class="t" style="left:1818.00px;top:299.00px;font-size:16px;color:#262626;font-weight:normal;letter-spacing:2.341px;">of</div>
<div class="t" style="left:1844.30px;top:299.00px;font-size:16px;color:#262626;font-weight:normal;letter-spacing:0.967px;">the</div>
<div class="t" style="left:1676.40px;top:322.00px;font-size:16px;color:#262626;font-weight:normal;letter-spacing:0.796px;">consideration</div>
<div class="t" style="left:1787.20px;top:322.00px;font-size:16px;color:#262626;font-weight:normal;letter-spacing:0.667px;">the</div>
<div class="t" style="left:1816.10px;top:322.00px;font-size:16px;color:#262626;font-weight:normal;letter-spacing:0.857px;">average</div>
<div class="t" style="left:1676.40px;top:357.00px;font-size:16px;color:#262626;font-weight:normal;letter-spacing:0.872px;">After</div>
<div class="t" style="left:1719.00px;top:357.00px;font-size:16px;color:#262626;font-weight:normal;letter-spacing:1.494px;">you</div>
<div class="t" style="left:1753.10px;top:357.00px;font-size:16px;color:#262626;font-weight:normal;letter-spacing:1.527px;">have</div>
<div class="t" style="left:1799.00px;top:357.00px;font-size:16px;color:#262626;font-weight:normal;letter-spacing:0.357px;">finished</div>
<div class="t" style="left:1862.60px;top:357.00px;font-size:16px;color:#262626;font-weight:normal;letter-spacing:0.607px;">proceed</div>
<div class="t" style="left:1676.50px;top:380.00px;font-size:16px;color:#262626;font-weight:normal;letter-spacing:0.530px;">Restaurant</div>
<div class="t" style="left:1764.20px;top:380.00px;font-size:16px;color:#262626;font-weight:normal;letter-spacing:0.431px;">worksheet.</div>
</div>
<div style="position:absolute;left:1899px;top:43px;width:17px;height:784px;background:#262626;"></div>
<div style="position:absolute;left:1902px;top:47px;width:14px;height:13px;background:#464646;"></div>
<svg style="position:absolute;left:1905px;top:50px" width="9" height="6"><path d="M0 5.5 L4.5 1 L9 5.5 Z" fill="#8c8c8c"/></svg>
<div style="position:absolute;left:1902px;top:62px;width:14px;height:723px;background:#545454;"></div>
<div style="position:absolute;left:1902px;top:785px;width:14px;height:28px;background:#393939;"></div>
<div style="position:absolute;left:1902px;top:813px;width:14px;height:13px;background:#464646;"></div>
<svg style="position:absolute;left:1905px;top:817px" width="9" height="6"><path d="M0 0.5 L4.5 5 L9 0.5 Z" fill="#8c8c8c"/></svg>
<div style="position:absolute;left:0px;top:827px;width:1916px;height:28px;background:#262626;"></div>
<div style="position:absolute;left:0px;top:827px;width:1899px;height:1px;background:#8a8a8a;"></div>
<div style="position:absolute;left:0px;top:828px;width:1899px;height:1px;background:#181818;"></div>
<div style="position:absolute;left:100px;top:829px;width:1529px;height:1px;background:#1b1b1b;"></div>
<svg style="position:absolute;left:27px;top:836px" width="6" height="9"><path d="M5 0.5 L0.5 4.5 L5 8.5 Z" fill="#9a9a9a"/></svg>
<svg style="position:absolute;left:55px;top:836px" width="6" height="9"><path d="M0.7 0.5 L5.2 4.5 L0.7 8.5 Z" fill="#f0f0f0"/></svg>
<div style="position:absolute;left:100px;top:831px;width:1px;height:21px;background:#b4b4b4;"></div>
<div style="position:absolute;left:0;top:827px;width:1628px;height:28px;overflow:hidden;">
<div style="position:absolute;left:103px;top:3px;width:92px;height:22px;background:#B1A0C7;"></div>
<div class="t" style="left:116.66px;top:7.00px;font-size:13px;color:#1b1b1b;font-weight:normal;letter-spacing:-0.151px;">Instructions</div>
<div style="position:absolute;left:197px;top:4px;width:1px;height:21px;background:#b4b4b4;"></div>
<div style="position:absolute;left:200px;top:3px;width:99px;height:22px;background:#B1A0C7;"></div>
<div class="t" style="left:213.30px;top:7.00px;font-size:13px;color:#1b1b1b;font-weight:normal;letter-spacing:-0.186px;">Assumptions</div>
<div style="position:absolute;left:301px;top:4px;width:1px;height:21px;background:#b4b4b4;"></div>
<div style="position:absolute;left:304px;top:3px;width:34px;height:22px;background:#95B3D7;"></div>
<div class="t" style="left:313.44px;top:7.00px;font-size:13px;color:#1b1b1b;font-weight:normal;letter-spacing:-0.398px;">PL</div>
<div style="position:absolute;left:340px;top:4px;width:1px;height:21px;background:#b4b4b4;"></div>
<div style="position:absolute;left:343px;top:3px;width:34px;height:22px;background:#DA9694;"></div>
<div class="t" style="left:351.76px;top:7.00px;font-size:13px;color:#1b1b1b;font-weight:normal;letter-spacing:-0.434px;">BS</div>
<div style="position:absolute;left:379px;top:4px;width:1px;height:21px;background:#b4b4b4;"></div>
<div style="position:absolute;left:382px;top:3px;width:34px;height:22px;background:#C4D79B;"></div>
<div class="t" style="left:390.77px;top:7.00px;font-size:13px;color:#1b1b1b;font-weight:normal;letter-spacing:-0.433px;">CF</div>
<div style="position:absolute;left:418px;top:4px;width:1px;height:21px;background:#b4b4b4;"></div>
<div style="position:absolute;left:421px;top:3px;width:88px;height:22px;background:#95B3D7;"></div>
<div class="t" style="left:432.66px;top:7.00px;font-size:13px;color:#1b1b1b;font-weight:normal;letter-spacing:-0.166px;">Hotel Sales</div>
<div style="position:absolute;left:511px;top:4px;width:1px;height:21px;background:#b4b4b4;"></div>
<div style="position:absolute;left:514px;top:3px;width:85px;height:22px;background:#95B3D7;"></div>
<div class="t" style="left:525.58px;top:7.00px;font-size:13px;color:#1b1b1b;font-weight:normal;letter-spacing:-0.177px;">Restaurant</div>
<div style="position:absolute;left:601px;top:4px;width:1px;height:21px;background:#b4b4b4;"></div>
<div style="position:absolute;left:604px;top:3px;width:117px;height:22px;background:#95B3D7;"></div>
<div class="t" style="left:617.12px;top:7.00px;font-size:13px;color:#1b1b1b;font-weight:normal;letter-spacing:-0.167px;">Conference Hall</div>
<div style="position:absolute;left:723px;top:4px;width:1px;height:21px;background:#b4b4b4;"></div>
<div style="position:absolute;left:723px;top:0px;width:145px;height:25px;background:linear-gradient(#ffffff 45%,#dde4ef);"></div>
<div style="position:absolute;left:723px;top:23px;width:145px;height:2px;background:#1d6b3e;"></div>
<div class="t" style="left:735.73px;top:7.00px;font-size:13px;color:#1d6b3e;font-weight:bold;letter-spacing:-0.263px;">Direct Costs Rooms</div>
<div style="position:absolute;left:870px;top:3px;width:99px;height:22px;background:#95B3D7;"></div>
<div class="t" style="left:881.99px;top:7.00px;font-size:13px;color:#1b1b1b;font-weight:normal;letter-spacing:-0.148px;">Staff Salaries</div>
<div style="position:absolute;left:971px;top:4px;width:1px;height:21px;background:#b4b4b4;"></div>
<div style="position:absolute;left:974px;top:3px;width:163px;height:22px;background:#95B3D7;"></div>
<div class="t" style="left:990.75px;top:7.00px;font-size:13px;color:#1b1b1b;font-weight:normal;letter-spacing:-0.151px;">Administration Salaries</div>
<div style="position:absolute;left:1139px;top:4px;width:1px;height:21px;background:#b4b4b4;"></div>
<div style="position:absolute;left:1142px;top:3px;width:81px;height:22px;background:#95B3D7;"></div>
<div class="t" style="left:1151.61px;top:7.00px;font-size:13px;color:#1b1b1b;font-weight:normal;letter-spacing:-0.199px;">SGA Costs</div>
<div style="position:absolute;left:1225px;top:4px;width:1px;height:21px;background:#b4b4b4;"></div>
<div style="position:absolute;left:1228px;top:3px;width:144px;height:22px;background:#DA9694;"></div>
<div class="t" style="left:1240.88px;top:7.00px;font-size:13px;color:#1b1b1b;font-weight:normal;letter-spacing:-0.169px;">Accounts Receivable</div>
<div style="position:absolute;left:1374px;top:4px;width:1px;height:21px;background:#b4b4b4;"></div>
<div style="position:absolute;left:1377px;top:3px;width:126px;height:22px;background:#DA9694;"></div>
<div class="t" style="left:1389.34px;top:7.00px;font-size:13px;color:#1b1b1b;font-weight:normal;letter-spacing:-0.173px;">Accounts Payable</div>
<div style="position:absolute;left:1505px;top:4px;width:1px;height:21px;background:#b4b4b4;"></div>
<div style="position:absolute;left:1509px;top:3px;width:80px;height:22px;background:#DA9694;"></div>
<div class="t" style="left:1519.15px;top:7.00px;font-size:13px;color:#1b1b1b;font-weight:normal;letter-spacing:-0.192px;">Purchases</div>
<div style="position:absolute;left:1591px;top:4px;width:1px;height:21px;background:#b4b4b4;"></div>
<div style="position:absolute;left:1594px;top:3px;width:166px;height:22px;background:#DA9694;"></div>
<div class="t" style="left:1603.50px;top:7.00px;font-size:13px;color:#1b1b1b;font-weight:normal;">Capital Expenditures</div>
<div style="position:absolute;left:1762px;top:4px;width:1px;height:21px;background:#b4b4b4;"></div>
</div>
<div style="position:absolute;left:1637px;top:841px;width:2px;height:3px;background:#eeeeee;"></div>
<div style="position:absolute;left:1641px;top:841px;width:2px;height:3px;background:#eeeeee;"></div>
<div style="position:absolute;left:1645px;top:841px;width:2px;height:3px;background:#eeeeee;"></div>
<svg style="position:absolute;left:1660px;top:832px" width="19" height="19"><circle cx="9.5" cy="9.5" r="7.8" stroke="#eeeeee" stroke-width="1.3" fill="none"/><path d="M9.5 5.5 V13.5 M5.5 9.5 H13.5" stroke="#eeeeee" stroke-width="2"/></svg>
<div style="position:absolute;left:1697px;top:836px;width:2px;height:3px;background:#eeeeee;"></div>
<div style="position:absolute;left:1697px;top:840px;width:2px;height:3px;background:#eeeeee;"></div>
<div style="position:absolute;left:1697px;top:844px;width:2px;height:3px;background:#eeeeee;"></div>
<div style="position:absolute;left:1714px;top:834px;width:183px;height:14px;background:#383838;"></div>
<div style="position:absolute;left:1715px;top:834px;width:14px;height:14px;background:#464646;"></div>
<svg style="position:absolute;left:1719px;top:837px" width="5" height="8"><path d="M5 0 L0 4 L5 8 Z" fill="#8a8a8a"/></svg>
<div style="position:absolute;left:1730px;top:834px;width:115px;height:14px;background:#525252;"></div>
<div style="position:absolute;left:1883px;top:834px;width:14px;height:14px;background:#464646;"></div>
<svg style="position:absolute;left:1888px;top:837px" width="5" height="8"><path d="M0 0 L5 4 L0 8 Z" fill="#8a8a8a"/></svg>
<div style="position:absolute;left:0px;top:855px;width:1916px;height:22px;background:#2e2e2e;"></div>
<div style="position:absolute;left:0px;top:855px;width:1916px;height:1px;background:#3a3a3a;"></div>
<div class="t" style="left:7.50px;top:861.00px;font-size:11.5px;color:#f0f0f0;font-weight:normal;letter-spacing:-0.809px;">Ready</div>
<div style="position:absolute;left:1620px;top:856px;width:40px;height:21px;background:#5e5e5e;"></div>
<svg style="position:absolute;left:1632px;top:858px" width="16" height="16"><path d="M1.5 1.5 H13.5 V13.5 H1.5 Z M5.5 1.5 V13.5 M9.5 1.5 V13.5 M1.5 5.5 H13.5 M1.5 9.5 H13.5" stroke="#f2f2f2" stroke-width="1.2" fill="none"/></svg>
<svg style="position:absolute;left:1672px;top:858px" width="16" height="16"><path d="M1.5 1.5 H14.5 V13.5 H1.5 Z M4.5 3.5 H11.5 V11.5 H4.5 Z M6 5.5 H10 M6 7.5 H10 M6 9.5 H10" stroke="#f2f2f2" stroke-width="1.1" fill="none"/></svg>
<svg style="position:absolute;left:1712px;top:858px" width="16" height="16"><path d="M1.5 1.5 H14.5 V13.5 H1.5 Z M1.5 8.5 H9.5 V1.5 M5.5 1.5 V8.5" stroke="#f2f2f2" stroke-width="1.1" fill="none"/></svg>
<div style="position:absolute;left:1746px;top:865px;width:8px;height:1px;background:#d8d8d8;"></div>
<div style="position:absolute;left:1759px;top:865.5px;width:100px;height:1px;background:#d8d8d8;"></div>
<div style="position:absolute;left:1807px;top:861px;width:5px;height:11px;background:#f0f0f0;"></div>
<div style="position:absolute;left:1864px;top:865.5px;width:8px;height:1px;background:#d8d8d8;"></div>
<div style="position:absolute;left:1867.5px;top:861.5px;width:1px;height:8.5px;background:#d8d8d8;"></div>
<div class="t" style="left:1885.50px;top:860.00px;font-size:12px;color:#f0f0f0;font-weight:normal;transform:scaleX(0.8603);transform-origin:left 0;">100%</div>
</body></html>
